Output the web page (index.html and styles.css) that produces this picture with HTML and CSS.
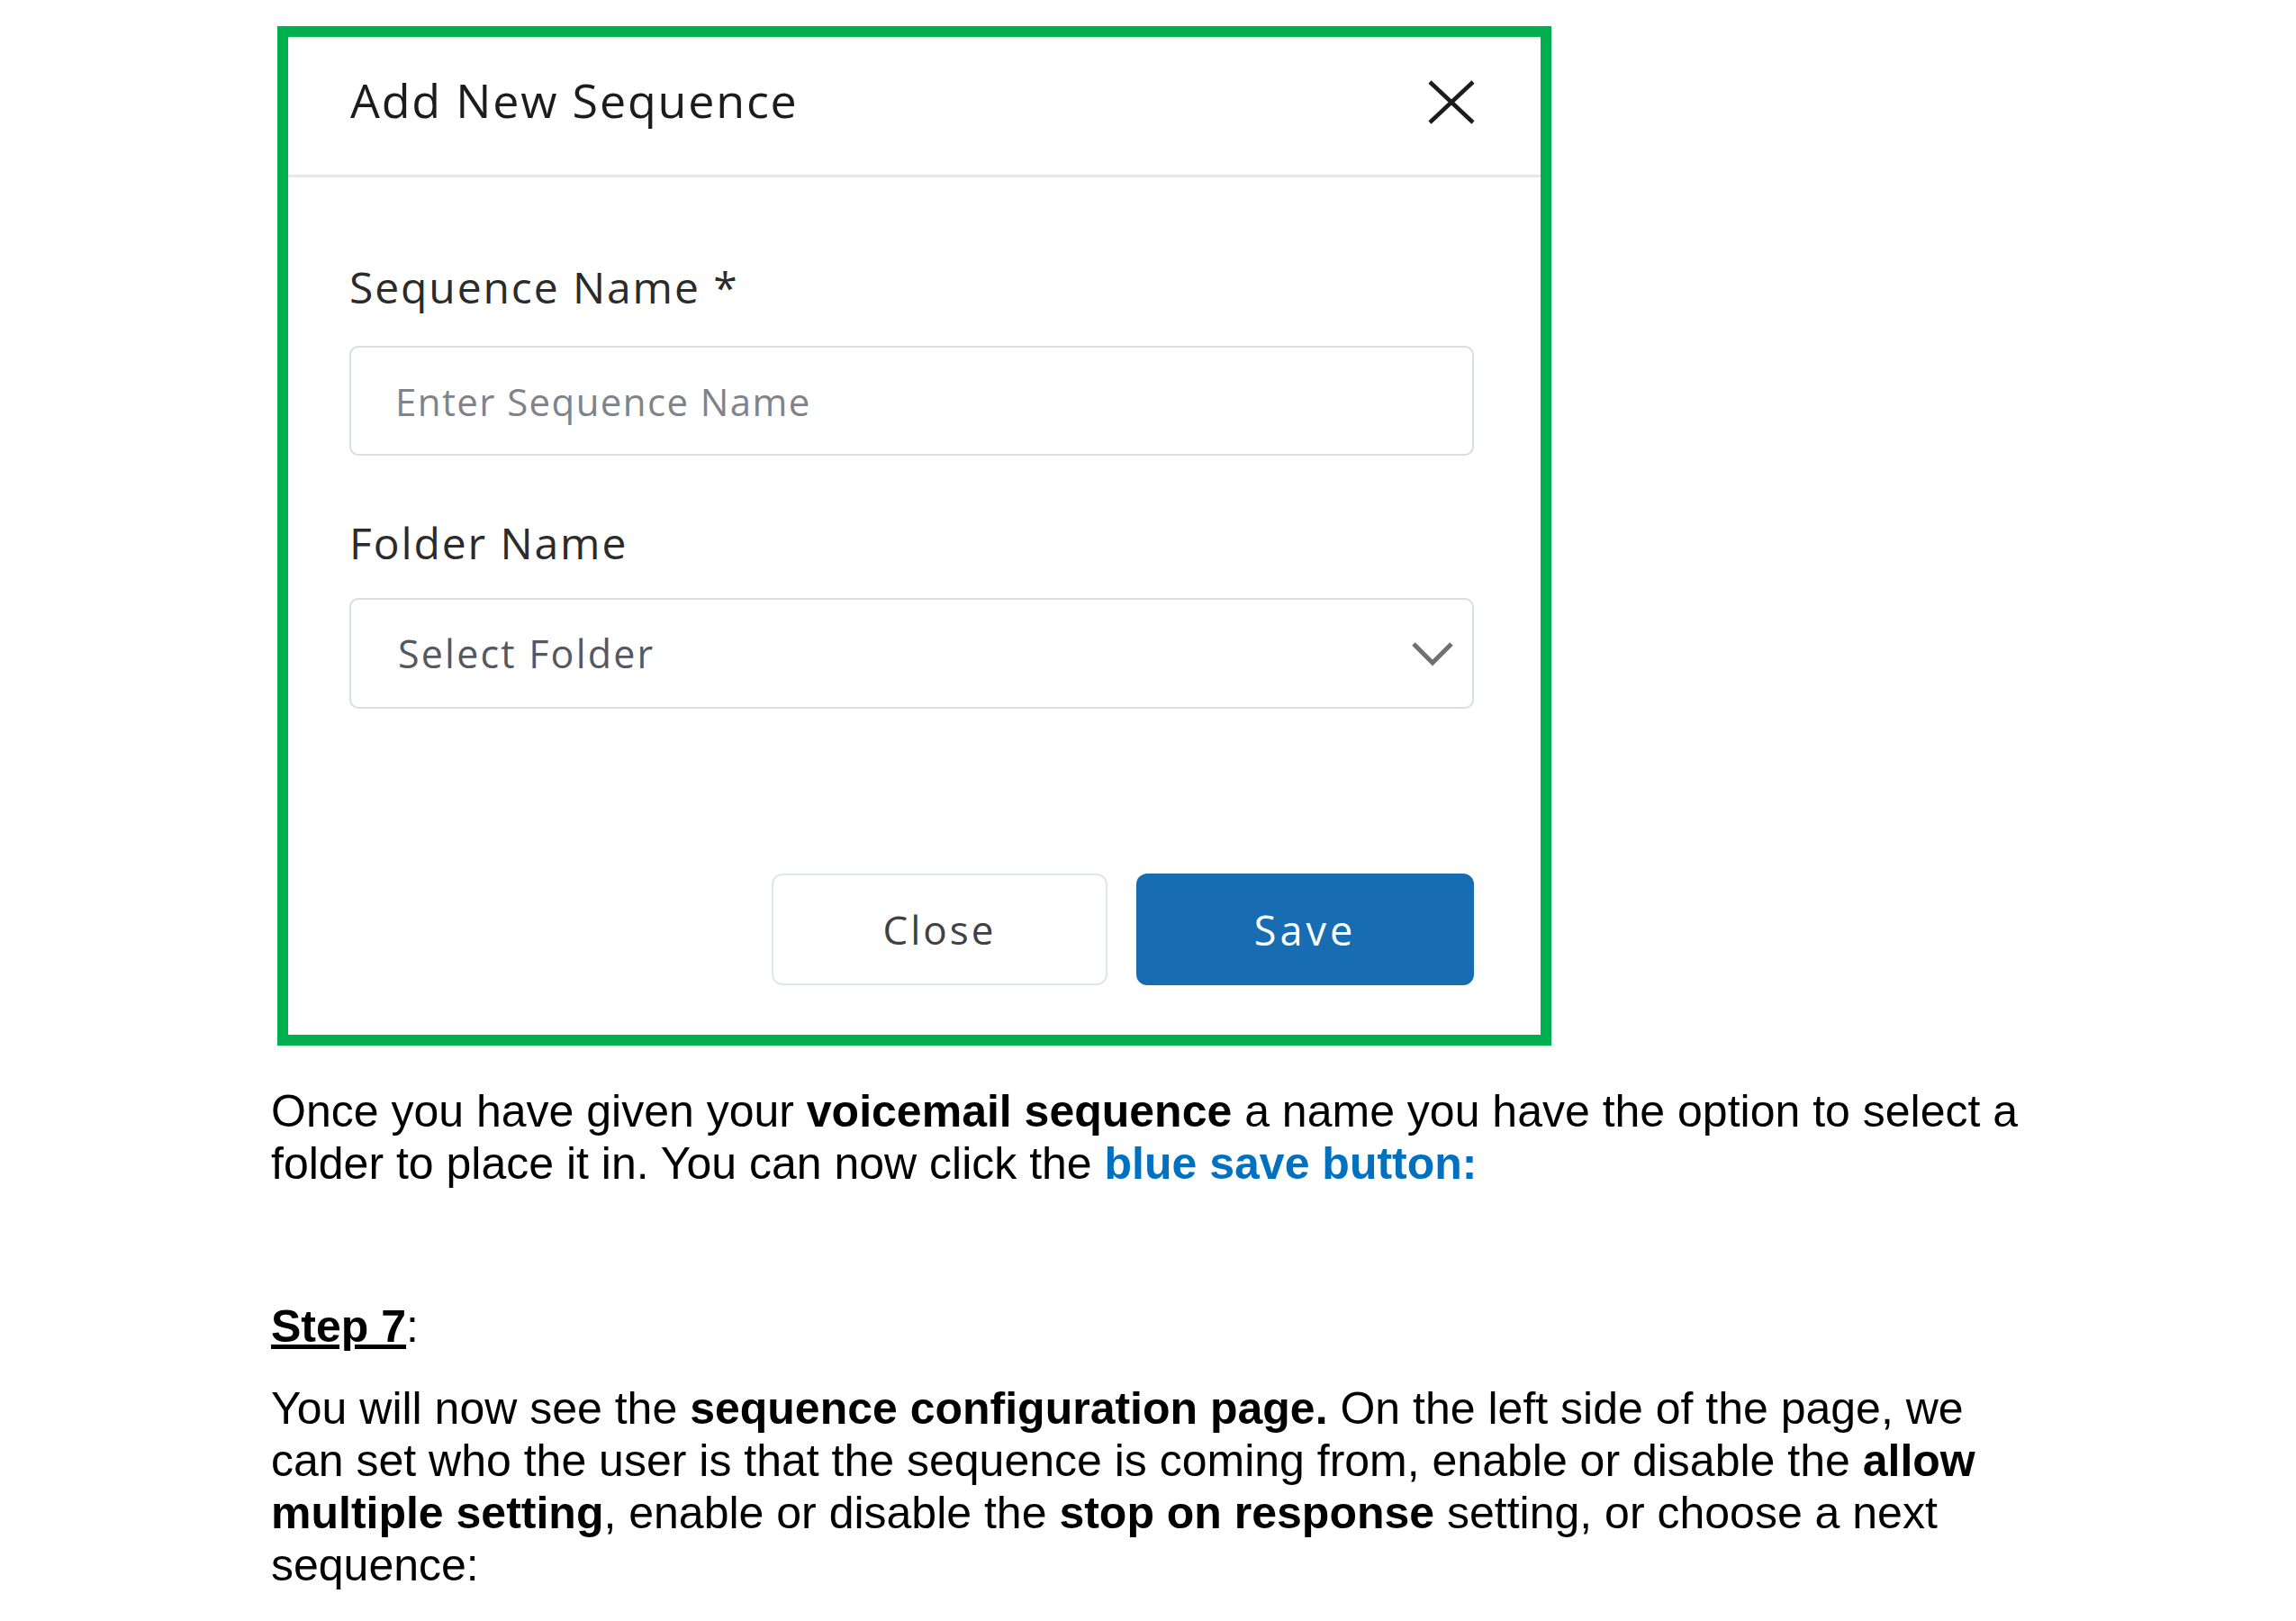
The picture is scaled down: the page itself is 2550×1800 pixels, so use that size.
FILE: index.html
```html
<!DOCTYPE html>
<html lang="en">
<head>
<meta charset="utf-8">
<title>Add New Sequence</title>
<link rel="stylesheet" href="styles.css">
</head>
<body>
<div class="modal">
  <div class="modal-header">
    <h2 class="modal-title">Add New Sequence</h2>
    <button class="close-x" aria-label="Close">
      <svg width="54" height="51" viewBox="0 0 54 51"><path d="M3 3 L51 48 M51 3 L3 48" stroke="#1c1c1c" stroke-width="4.5" fill="none"/></svg>
    </button>
  </div>
  <div class="modal-body">
    <label class="field-label">Sequence Name *</label>
    <div class="field input">Enter Sequence Name</div>
    <label class="field-label label-2">Folder Name</label>
    <div class="field select">
      <span>Select Folder</span>
      <svg width="48" height="28" viewBox="0 0 48 28"><path d="M3 3 L24 24 L45 3" stroke="#707070" stroke-width="5" fill="none"/></svg>
    </div>
  </div>
  <div class="modal-footer">
    <button class="btn btn-close">Close</button>
    <button class="btn btn-save">Save</button>
  </div>
</div>

<div class="doc">
  <p class="para-1">Once you have given your <b>voicemail sequence</b> a name you have the option to select a folder to place it in. You can now click the <b class="blue">blue save button:</b></p>
  <p class="step"><b><u>Step 7</u></b>:</p>
  <p class="para-2">You will now see the <b>sequence configuration page.</b> On the left side of the page, we can set who the user is that the sequence is coming from, enable or disable the <b>allow multiple setting</b>, enable or disable the <b>stop on response</b> setting, or choose a next sequence:</p>
</div>
</body>
</html>
```
FILE: styles.css
```css
* { box-sizing: border-box; }

html, body {
  margin: 0;
  padding: 0;
  background: #ffffff;
}

.modal {
  width: 1415px;
  height: 1132px;
  margin: 29px 0 0 308px;
  border: 12px solid #00b050;
  background: #ffffff;
  display: flex;
  flex-direction: column;
  font-family: "Open Sans", "Noto Sans", sans-serif;
}

.modal-header {
  height: 156px;
  border-bottom: 3px solid #e3e7ef;
  display: flex;
  align-items: center;
  justify-content: space-between;
  padding: 0 72px 13px 69px;
}

.modal-title {
  margin: 0;
  font-size: 52px;
  font-weight: 500;
  letter-spacing: 1.8px;
  line-height: 1;
  color: #1c1c1c;
}

.close-x {
  border: 0;
  background: none;
  padding: 0;
  display: flex;
  margin-top: 4px;
}

.modal-body {
  display: flex;
  flex-direction: column;
  padding: 0 74px 0 68px;
}

.field-label {
  display: block;
  margin-top: 92px;
  font-size: 48px;
  letter-spacing: 1.9px;
  line-height: 60px;
  color: #2b2b2b;
}

.label-2 {
  margin-top: 67px;
}

.field {
  border: 2px solid #d9dde6;
  border-radius: 10px;
  display: flex;
  align-items: center;
}

.input {
  margin-top: 35px;
  height: 122px;
  padding-left: 49px;
  font-size: 42px;
  letter-spacing: 1.4px;
  color: #80838a;
}

.select {
  margin-top: 31px;
  height: 123px;
  padding: 0 20px 0 52px;
  justify-content: space-between;
  font-size: 43px;
  letter-spacing: 2.2px;
  color: #55595f;
}

.modal-footer {
  margin-top: auto;
  display: flex;
  justify-content: flex-end;
  gap: 32px;
  padding: 0 74px 55px 68px;
}

.btn {
  height: 124px;
  border-radius: 12px;
  font-family: "Open Sans", "Noto Sans", sans-serif;
  font-size: 44px;
  letter-spacing: 3px;
  cursor: pointer;
}

.btn-close {
  width: 373px;
  border: 2px solid #e1e5ee;
  background: #ffffff;
  color: #3f4245;
}

.btn-save {
  width: 375px;
  border: 0;
  background: #176cb2;
  color: #ffffff;
  font-size: 45px;
  font-weight: 500;
  letter-spacing: 4px;
}

.doc {
  margin-left: 301px;
  width: 1950px;
  font-family: "Liberation Sans", Arial, sans-serif;
  font-size: 50px;
  line-height: 58px;
  color: #000000;
}

.doc p {
  margin: 0;
}

.doc .para-1 {
  margin-top: 44px;
}

.doc .step {
  margin-top: 123px;
}

.doc .para-2 {
  margin-top: 33px;
}

.blue {
  color: #0070c0;
}
```
